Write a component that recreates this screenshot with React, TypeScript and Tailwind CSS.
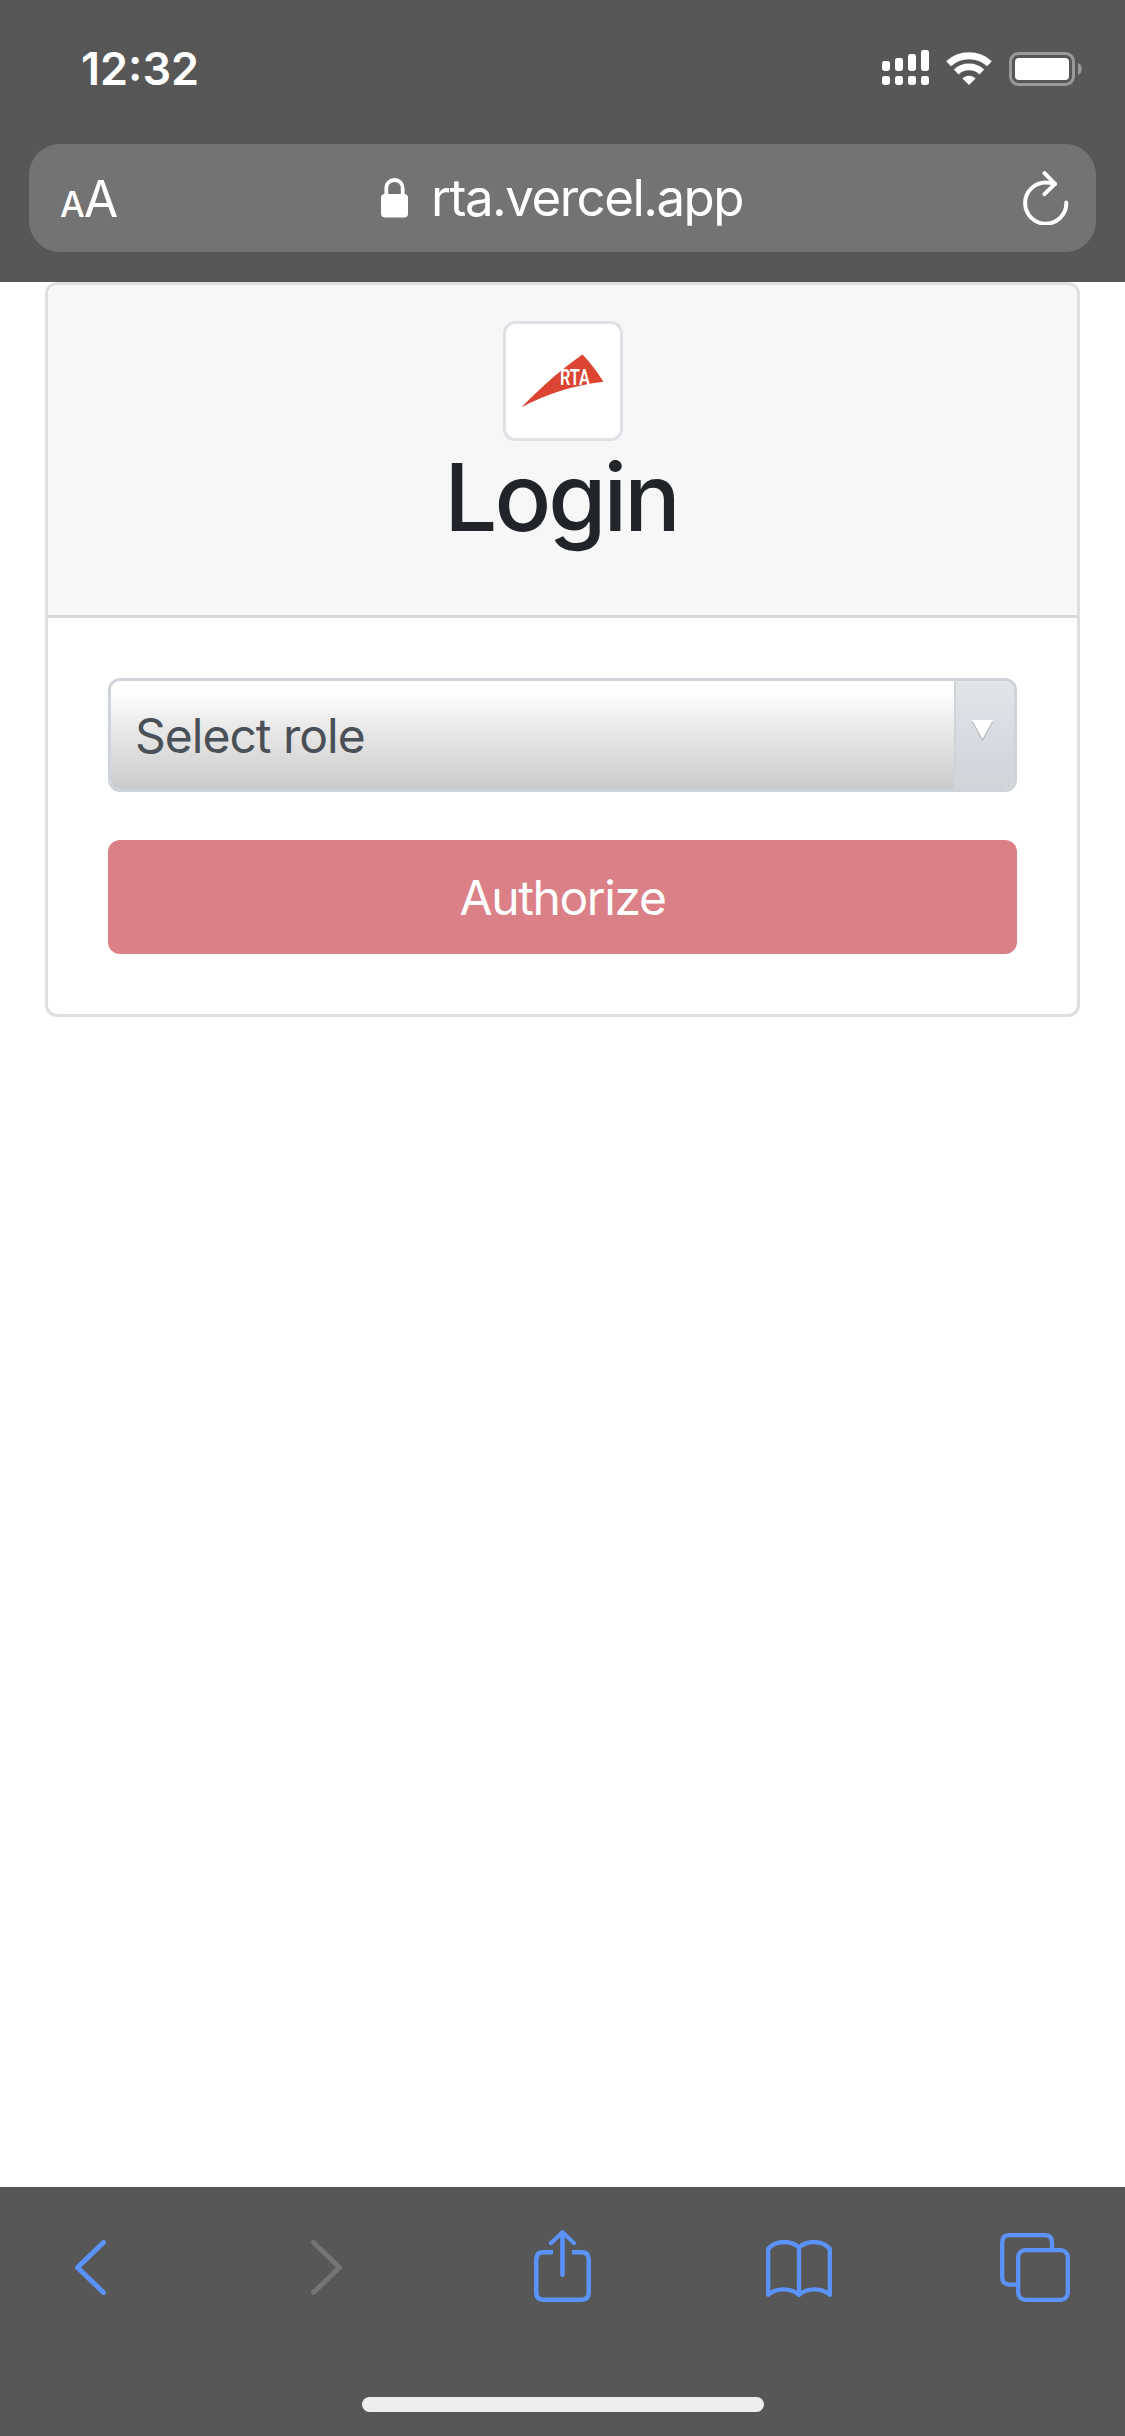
import React from "react";

function SignalIcon() {
  return (
    <svg className="block" width="47" height="36" viewBox="0 0 47 36" fill="#fff">
      <rect x="0" y="11" width="8" height="10" rx="2.4" />
      <rect x="13" y="8" width="8" height="13" rx="2.4" />
      <rect x="26" y="4" width="8" height="17" rx="2.4" />
      <rect x="39" y="0" width="8" height="21" rx="2.4" />
      <rect x="0" y="26" width="8" height="9" rx="2.4" />
      <rect x="13" y="26" width="8" height="9" rx="2.4" />
      <rect x="26" y="26" width="8" height="9" rx="2.4" />
      <rect x="39" y="26" width="8" height="9" rx="2.4" />
    </svg>
  );
}

function WifiIcon() {
  return (
    <svg className="block" width="46" height="34" viewBox="0 0 46 34" fill="none" stroke="#fff">
      <path d="M2.6 11.8C14 1.2 32 1.2 43.400 11.8" strokeWidth="7" />
      <path d="M10.200 19.900C17.500 13.200 28.500 13.200 35.800 19.900" strokeWidth="6.800" />
      <path d="M23 33 16.400 26.400C20 22.900 26 22.900 29.600 26.400Z" fill="#fff" stroke="none" />
    </svg>
  );
}

function BatteryIcon() {
  return (
    <svg className="block" width="74" height="34" viewBox="0 0 74 34">
      <rect x="1.500" y="1.500" width="63" height="31" rx="8" fill="none" stroke="#999" strokeWidth="3" />
      <rect x="6" y="6" width="54" height="22" rx="4" fill="#fff" />
      <path d="M69 11c5 1.500 5 10.500 0 12Z" fill="#999" />
    </svg>
  );
}

function LockIcon() {
  return (
    <svg className="block" width="27" height="40" viewBox="0 0 27 40">
      <rect x="0" y="16" width="27" height="23.500" rx="4" fill="#fff" />
      <path d="M5.300 18V10.500C5.300 5.300 8.800 2 13.500 2s8.200 3.300 8.200 8.500V18" fill="none" stroke="#fff" strokeWidth="3.800" />
    </svg>
  );
}

function ReloadIcon() {
  return (
    <svg className="block" width="46" height="54" viewBox="0 0 46 54" fill="none" stroke="#fff" strokeWidth="4" strokeLinecap="round" strokeLinejoin="round">
      <path d="M43.300 31.500A20.600 20.600 0 1 1 22.700 11.500C26 11.500 29 12 32 13" />
      <path d="M21.500 2.200 32 12.800 21.500 23.200" />
    </svg>
  );
}

function SailLogo() {
  return (
    <svg className="block" width="114" height="114" viewBox="506 324 114 114">
      <path d="M521.500 407.300C541 387 563 368 582.600 354.500Q593.500 366 603.500 381.700Q559 387 521.500 407.300Z" fill="#dc4433" />
      <text x="560" y="385" fontFamily="Roboto, sans-serif" fontSize="22.500" fontWeight="600" fill="#fff" textLength="30" lengthAdjust="spacingAndGlyphs">
        RTA
      </text>
    </svg>
  );
}

const iconStroke = { fill: "none", strokeLinecap: "round", strokeLinejoin: "round" } as const;

function Toolbar() {
  return (
    <nav className="flex h-[210px] items-start pl-[75px] pt-[43px]">
      <svg className="mt-[10px] block" width="31" height="55" viewBox="75 2240 31 55" stroke="#5b93fa" strokeWidth="5" {...iconStroke}>
        <path d="M103.500 2242.500 77.500 2267.500 103.500 2292.500" />
      </svg>
      <svg className="ml-[205px] mt-[10px] block" width="31" height="55" viewBox="311 2240 31 55" stroke="#757575" strokeWidth="5" {...iconStroke}>
        <path d="M313.500 2242.500 339.500 2267.500 313.500 2292.500" />
      </svg>
      <svg className="ml-[192px] block" width="57" height="72" viewBox="534 2230 57 72" stroke="#5b93fa" strokeWidth="4.500" {...iconStroke}>
        <path strokeLinecap="butt" d="M553 2252.300H543.500Q536.300 2252.300 536.300 2259.500V2292.500Q536.300 2299.700 543.500 2299.700H581.500Q588.700 2299.700 588.700 2292.500V2259.500Q588.700 2252.300 581.500 2252.300H572" />
        <path strokeWidth="4" d="M550.800 2243.200 562.500 2232.200 574.200 2243.200" />
        <path strokeWidth="4.600" d="M562.500 2233V2274.800" />
      </svg>
      <svg className="ml-[175px] mt-[10px] block" width="66" height="57" viewBox="766 2240 66 57" stroke="#5b93fa" strokeWidth="4.300" {...iconStroke}>
        <path d="M799 2247.500C791 2240 776 2240 768.200 2248.700V2294.800C776 2287.500 791 2287.500 799 2294.800C807 2287.500 822 2287.500 829.800 2294.800V2248.700C822 2240 807 2240 799 2247.500ZV2294.800" />
      </svg>
      <svg className="ml-[168px] mt-[3px] block" width="70" height="69" viewBox="1000 2233 70 69" stroke="#5b93fa" strokeWidth="4.300" {...iconStroke}>
        <path strokeLinecap="butt" d="M1016 2284.600H1009.500Q1002.200 2284.600 1002.200 2277.300V2242.500Q1002.200 2235.200 1009.500 2235.200H1044.700Q1052 2235.200 1052 2242.500V2249" />
        <rect x="1018.200" y="2250.200" width="49.600" height="49.600" rx="7" />
      </svg>
    </nav>
  );
}

export default function App() {
  return (
    <div className="flex h-[2436px] w-[1125px] flex-col overflow-hidden bg-white font-['Inter',sans-serif]">
      <header className="h-[282px] shrink-0 bg-[#575757] text-white">
        <div className="flex h-[144px] items-start pl-[81px] pr-[42px] pt-[50px]">
          <div className="mt-[-8px] text-[45px] font-semibold leading-[54px]">12:32</div>
          <div className="ml-auto flex items-start">
            <SignalIcon />
            <div className="ml-[17px] mt-[2px]"><WifiIcon /></div>
            <div className="ml-[17px] mt-[2px]"><BatteryIcon /></div>
          </div>
        </div>
        <div className="mx-[29px] flex h-[108px] items-start rounded-[31px] bg-[#737373] pl-[31px] pr-[27px]">
          <div className="mt-[25px] flex w-[321px] items-baseline">
            <span className="text-[35px] font-medium leading-[60px] tracking-[-1px]">A</span>
            <span className="text-[50px] leading-[60px]">A</span>
          </div>
          <div className="mt-[34px]"><LockIcon /></div>
          <div className="ml-[23px] mt-[24px] text-[51px] leading-[60px] tracking-[-1.5px]">rta.vercel.app</div>
          <div className="ml-auto mt-[27px]"><ReloadIcon /></div>
        </div>
      </header>

      <main className="flex-1 px-[45px]">
        <section className="h-[735px] overflow-hidden rounded-[12px] border-[3px] border-[#dfdfdf] bg-white">
          <div className="flex h-[333px] flex-col items-center border-b-[3px] border-[#d8d8d8] bg-[#f7f7f7] pt-[36px]">
            <div className="h-[120px] w-[120px] rounded-[12px] border-[3px] border-[#dee2e6] bg-white">
              <SailLogo />
            </div>
            <h1 className="pr-[3px] text-[94px] font-medium leading-[112px] tracking-[-3px] text-[#212529]">Login</h1>
          </div>
          <div className="flex flex-col gap-[48px] p-[60px]">
            <div className="flex h-[114px] overflow-hidden rounded-[12px] border-[3px] border-[#ced4da]">
              <div className="flex-1 bg-[linear-gradient(#fff_0%,#fdfdfd_14%,#ebebeb_40%,#cbcbcb_100%)] pl-[24px] pt-[25px] text-[48px] leading-[60px] tracking-[-1px] text-[#495057]">Select role</div>
              <div className="w-[60px] border-l-2 border-[#ced4da] bg-[linear-gradient(#e2e6e9,#d9dce2_45%,#d0d5da)] pl-[16px] pt-[39px]">
                <svg className="block" width="21" height="22" viewBox="0 0 21 22">
                  <path d="M0 2H21L10.500 21Z" fill="#acb0b3" />
                  <path d="M0 0H21L10.500 19Z" fill="#fff" />
                </svg>
              </div>
            </div>
            <button className="h-[114px] rounded-[12px] bg-[#da8086] pt-[2px] text-[48px] leading-[60px] tracking-[-1.4px] text-white">Authorize</button>
          </div>
        </section>
      </main>

      <footer className="h-[249px] shrink-0 bg-[#575757]">
        <Toolbar />
        <div className="mx-auto h-[15px] w-[402px] rounded-full bg-[#eee]" />
      </footer>
    </div>
  );
}
